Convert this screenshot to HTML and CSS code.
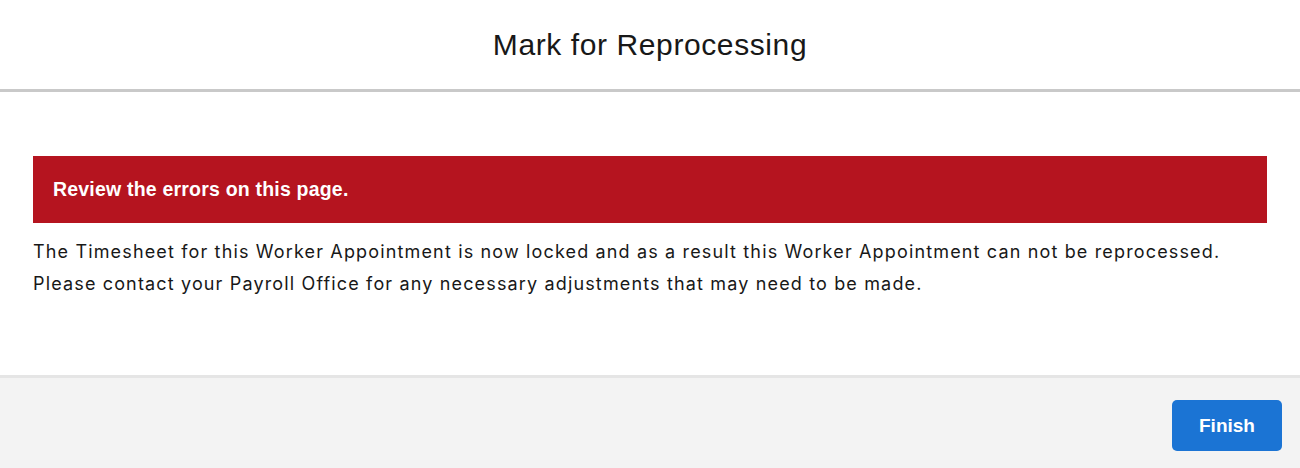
FILE: index.html
```html
<!DOCTYPE html>
<html lang="en">
<head>
    <meta charset="UTF-8">
    <title>Mark for Reprocessing</title>
    <link rel="stylesheet" href="styles.css">
</head>
<body>
    <div class="modal">
        <div class="modal-header">
            <h2>Mark for Reprocessing</h2>
        </div>
        <div class="modal-body">
            <div class="error-banner">Review the errors on this page.</div>
            <p class="message">The Timesheet for this Worker Appointment is now locked and as a result this Worker Appointment can not be reprocessed.<br>Please contact your Payroll Office for any necessary adjustments that may need to be made.</p>
        </div>
        <div class="modal-footer">
            <button class="btn-finish">Finish</button>
        </div>
    </div>
</body>
</html>
```

FILE: styles.css
```css
body {
    margin: 0;
    font-family: 'Liberation Sans', Arial, sans-serif;
    color: #181818;
    background-color: #fff;
}
.modal {
    display: flex;
    flex-direction: column;
    height: 468px;
}
.modal-header {
    height: 89px;
    display: flex;
    align-items: center;
    justify-content: center;
    border-bottom: 3px solid #c9c9c9;
}
.modal-header h2 {
    margin: 0;
    font-size: 30px;
    font-weight: normal;
    letter-spacing: 0.6px;
}
.modal-body {
    flex: 1;
    padding: 64px 33px 0;
}
.error-banner {
    background-color: #b5141f;
    color: white;
    font-weight: bold;
    font-size: 19.5px;
    letter-spacing: 0.2px;
    height: 67px;
    display: flex;
    align-items: center;
    padding-left: 20px;
}
.message {
    margin: 13px 0 0;
    font-family: Inter, 'Liberation Sans', sans-serif;
    font-size: 18px;
    letter-spacing: 1.15px;
    line-height: 32px;
}
.modal-footer {
    height: 90px;
    background-color: #f3f3f3;
    border-top: 3px solid #e5e5e5;
    display: flex;
    align-items: center;
    justify-content: flex-end;
    padding-right: 18px;
}
.btn-finish {
    width: 110px;
    height: 51px;
    margin-top: 5px;
    background-color: #1b74d4;
    color: white;
    border: none;
    border-radius: 5px;
    font-family: inherit;
    font-weight: bold;
    font-size: 19px;
}
```
